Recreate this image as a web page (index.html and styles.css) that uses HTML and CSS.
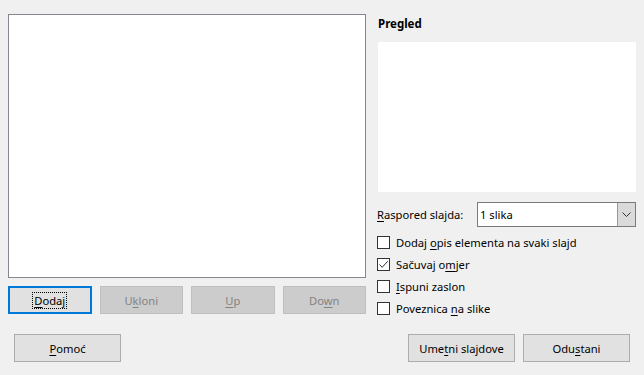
FILE: index.html
```html
<!DOCTYPE html>
<html lang="hr">
<head>
  <meta charset="UTF-8">
  <title>Album fotografija</title>
  <link rel="stylesheet" href="styles.css">
</head>
<body>
  <div class="dialog">
    <div class="main">
      <div class="left">
        <div class="listbox"></div>
        <div class="btn-row">
          <button class="btn focused"><span class="focus-ring"><u>D</u>odaj</span></button>
          <button class="btn" disabled>U<u>k</u>loni</button>
          <button class="btn" disabled><u>U</u>p</button>
          <button class="btn" disabled>Do<u>w</u>n</button>
        </div>
      </div>

      <div class="right">
        <h2 class="title">Pregled</h2>
        <div class="preview"></div>

        <div class="layout-row">
          <label class="layout-label"><u>R</u>aspored slajda:</label>
          <div class="combo">
            <span class="combo-text">1 slika</span>
            <span class="combo-btn">
              <svg width="9" height="5" viewBox="0 0 9 5"><path d="M0.5 0.5 L4.5 4.5 L8.5 0.5" fill="none" stroke="#333" stroke-width="1"/></svg>
            </span>
          </div>
        </div>

        <div class="checks">
          <div class="check"><span class="box"></span><span>Dodaj <u>o</u>pis elementa na svaki slajd</span></div>
          <div class="check"><span class="box"><svg width="11" height="11" viewBox="0 0 11 11"><path d="M1.5 5.5 L4.2 8.3 L9.8 2.2" fill="none" stroke="#333" stroke-width="1"/></svg></span><span>Sačuvaj o<u>m</u>jer</span></div>
          <div class="check"><span class="box"></span><span><u>I</u>spuni zaslon</span></div>
          <div class="check"><span class="box"></span><span>Poveznica <u>n</u>a slike</span></div>
        </div>
      </div>
    </div>

    <div class="footer">
      <button class="btn wide"><u>P</u>omoć</button>
      <div class="footer-right">
        <button class="btn wide">Ume<u>t</u>ni slajdove</button>
        <button class="btn wide">Odu<u>s</u>tani</button>
      </div>
    </div>
  </div>
</body>
</html>
```

FILE: styles.css
```css
body {
  margin: 0;
  background: #f0f0f0;
  font-family: "Noto Sans", "Open Sans", sans-serif;
  font-size: 11.2px;
  color: #000;
}
u {
  text-decoration-thickness: 1px;
  text-underline-offset: 2px;
}
.dialog {
  width: 644px;
  height: 375px;
}
.main {
  display: flex;
  padding: 14px 0 0 8px;
}
.left {
  width: 358px;
}
.listbox {
  height: 262px;
  background: #fff;
  border: 1px solid #828790;
}
.btn-row {
  display: grid;
  grid-template-columns: repeat(4, 1fr);
  gap: 8px;
  margin-top: 8px;
}
.btn {
  height: 28px;
  font-family: inherit;
  font-size: 11.2px;
  color: #000;
  background: #e1e1e1;
  border: 1px solid #adadad;
  padding: 0;
  margin: 0;
}
.btn:disabled {
  background: #cccccc;
  border-color: #bfbfbf;
  color: #838383;
}
.btn.focused {
  border: 2px solid #0078d7;
}
.focus-ring {
  outline: 1px dotted #000;
  outline-offset: 0;
  padding: 0 1px;
}
.right {
  width: 259px;
  margin-left: 11px;
}
.title {
  font-size: 11.5px;
  font-weight: bold;
  margin: 2px 0 0 1px;
  line-height: 16px;
}
.preview {
  height: 150px;
  margin: 10px 0 0 1px;
  background: #fff;
}
.layout-row {
  display: flex;
  align-items: center;
  margin-top: 10px;
}
.layout-label {
  width: 100px;
}
.combo {
  flex: 1;
  display: flex;
  height: 23px;
  background: #fff;
  border: 1px solid #7a7a7a;
}
.combo-text {
  flex: 1;
  padding-left: 2px;
  line-height: 23px;
}
.combo-btn {
  width: 17px;
  display: flex;
  align-items: center;
  justify-content: center;
  background: #dadada;
  border-left: 1px solid #999;
}
.checks {
  margin-top: 4px;
}
.check {
  display: flex;
  align-items: center;
  height: 22px;
}
.box {
  width: 11px;
  height: 11px;
  border: 1px solid #333;
  background: #fff;
  margin-right: 6px;
  display: flex;
  align-items: center;
  justify-content: center;
}
.footer {
  display: flex;
  justify-content: space-between;
  padding: 15px 14px 0 14px;
}
.footer-right {
  display: flex;
  gap: 8px;
}
.wide {
  width: 107px;
  height: 28px;
}
```
